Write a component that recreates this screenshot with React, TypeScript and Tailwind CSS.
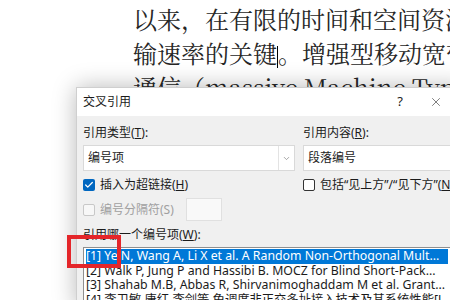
import { Check, ChevronDown, X } from 'lucide-react';

const ui = { fontFamily: '"Segoe UI", "Noto Sans", "Noto Sans CJK SC", sans-serif' };
const doc = { fontFamily: '"Noto Serif CJK SC", "Liberation Serif", "Noto Sans CJK SC", serif' };

const refs = [
  '[1] Ye N, Wang A, Li X et al. A Random Non-Orthogonal Mult...',
  '[2] Walk P, Jung P and Hassibi B. MOCZ for Blind Short-Pack...',
  '[3] Shahab M.B, Abbas R, Shirvanimoghaddam M et al. Grant...',
  '[4] 李卫敏,唐红,李剑等.免调度非正交多址接入技术及其系统性能[J...',
];

function Select({ value, className }: { value: string; className?: string }) {
  return (
    <div className={`flex h-[26px] items-center bg-white border border-[#d9d9d9] ${className ?? ''}`}>
      <span className="flex-1 pl-[4px] text-[12px] text-[#1b1b1b]">{value}</span>
      <div className="flex h-full w-[16px] items-center justify-center border-l border-[#e3e3e3]">
        <ChevronDown size={9} className="text-[#8a8a8a]" />
      </div>
    </div>
  );
}

export default function App() {
  return (
    <div className="relative h-[300px] w-[450px] overflow-hidden bg-white">
      <div style={doc} className="pl-[133px] pt-[2px] text-[24px] leading-[34px] text-[#262626] whitespace-nowrap">
        <div>以来，在有限的时间和空间资源</div>
        <div>
          输速率的关键<span className="inline-block h-[22px] w-0 border-l border-black align-middle" />。增强型移动宽带
        </div>
        <div>通信（massive Machine Type Communication</div>
      </div>

      <div
        style={ui}
        className="absolute left-[76px] top-[87px] w-[390px] bg-[#f0f0f0] border border-[#cfcfcf] shadow-[0_0_22px_rgba(0,0,0,0.28)]"
      >
        <div className="flex h-[28px] items-center bg-white pl-[6px]">
          <span className="flex-1 text-[12px] text-[#1b1b1b]">交叉引用</span>
          <span className="w-[30px] text-center text-[13px] text-[#222]">?</span>
          <span className="flex w-[50px] items-center justify-center">
            <X size={14} strokeWidth={1} className="text-[#222] -ml-[8px]" />
          </span>
        </div>

        <div className="pl-[6px] pt-[9px] text-[12px] text-[#1b1b1b]">
          <div className="grid grid-cols-[212px_1fr] gap-x-[8px]">
            <span className="leading-[16px]">引用类型(<u>T</u>):</span>
            <span className="leading-[16px]">引用内容(<u>R</u>):</span>
            <Select value="编号项" className="mt-[4px]" />
            <Select value="段落编号" className="mt-[4px] -mr-[4px]" />
            <div className="mt-[7px] flex items-center gap-[5px]">
              <span className="flex h-[12px] w-[12px] items-center justify-center rounded-[2px] bg-[#0067c0]">
                <Check size={10} strokeWidth={3} className="text-white" />
              </span>
              <span className="leading-[14px]">插入为超链接(<u>H</u>)</span>
            </div>
            <div className="mt-[7px] flex items-center gap-[5px] whitespace-nowrap">
              <span className="h-[12px] w-[12px] rounded-[2px] border border-[#333] bg-white" />
              <span className="leading-[14px]">包括“见上方”/“见下方”(<u>N</u>)</span>
            </div>
          </div>

          <div className="mt-[6px] flex items-center">
            <span className="h-[12px] w-[12px] rounded-[2px] border border-[#c8c8c8] bg-[#f7f7f7]" />
            <span className="ml-[5px] w-[86px] text-[#a0a0a0]">编号分隔符(S)</span>
            <span className="h-[23px] w-[36px] border border-[#e0e0e0] bg-[#f9f9f9]" />
          </div>

          <div className="mt-[6px] leading-[16px]">引用哪一个编号项(<u>W</u>):</div>

          <div className="mt-[4px] mr-[12px] h-[60px] border border-[#8f8f8f] bg-white pl-[2px] pt-[1px] pr-[4px] whitespace-nowrap overflow-hidden">
            {refs.map((r, i) => (
              <div
                key={i}
                className={`h-[14.5px] leading-[14.5px] text-[12.3px] ${i === 0 ? 'bg-[#0078d7] text-white' : 'text-[#1b1b1b]'}`}
              >
                {r}
              </div>
            ))}
          </div>
        </div>
      </div>

      <div className="absolute left-[67px] top-[235px] h-[33px] w-[54px] border-[4px] border-[#e4262a]" />
    </div>
  );
}
